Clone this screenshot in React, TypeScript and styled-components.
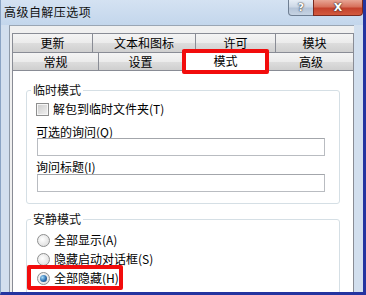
import React from "react";
import styled, { createGlobalStyle } from "styled-components";

const GlobalStyle = createGlobalStyle`
  html, body {
    margin: 0;
    padding: 0;
    background: #ffffff;
  }
  * {
    box-sizing: border-box;
  }
`;

// whole dialog, with the light aero frame and the dark blue outer edge
const Window = styled.div`
  width: 366px;
  height: 295px;
  display: flex;
  flex-direction: column;
  overflow: hidden;
  background: #d2dfee;
  border-left: 1px solid #8aa4c4;
  border-right: 3px solid #2434a0;
  border-bottom: 3px solid #2434a0;
  font-family: "Noto Sans CJK SC", "Liberation Sans", sans-serif;
  font-size: 12px;
  color: #000;
`;

const TitleBar = styled.div`
  height: 25px;
  flex: none;
  display: flex;
  align-items: flex-start;
  background: linear-gradient(#d4e2f2, #c3d6ec);
`;

const Title = styled.div`
  padding-left: 3px;
  line-height: 24px;
  font-size: 12px;
  letter-spacing: 0.45px;
  color: #111;
`;

const CaptionButtons = styled.div`
  margin-left: auto;
  display: flex;
`;

const CaptionButton = styled.div<{ $w: number; $close?: boolean }>`
  width: ${(p) => p.$w}px;
  height: 16px;
  display: flex;
  align-items: center;
  justify-content: center;
  font-family: "DejaVu Sans", sans-serif;
  font-weight: bold;
  font-size: 11px;
  color: #fff;
  text-shadow: 0 0 2px #333, 0 0 1px #222;
  border: 1px solid ${(p) => (p.$close ? "#7a2a20" : "#6f7f93")};
  border-top: none;
  margin-left: -1px;
  border-radius: ${(p) => (p.$close ? "0 0 4px 0" : "0 0 0 4px")};
  background: ${(p) =>
    p.$close
      ? "linear-gradient(#e8a594 0%, #d7715c 45%, #c4412c 55%, #d35a3e 100%)"
      : "linear-gradient(#e6edf6 0%, #cdd8e6 45%, #b5c4d8 55%, #c6d3e3 100%)"};
`;

// dialog client area (grey)
const Client = styled.div`
  flex: 1;
  min-height: 0;
  margin: 0 9px 0 8px;
  display: flex;
  flex-direction: column;
  background: #f0f0f0;
  border-left: 1px solid #8e9aa8;
  border-top: 1px solid #9aa6b4;
  padding: 7px 0 0 2px;
`;

const TabRow = styled.div`
  display: flex;
  position: relative;
`;

const Tab = styled.div<{ $w: number; $active?: boolean; $front?: boolean }>`
  position: relative;
  width: ${(p) => p.$w}px;
  height: ${(p) => (p.$active ? 21 : p.$front ? 19 : 19)}px;
  margin-top: ${(p) => (p.$active ? -2 : 0)}px;
  margin-left: -1px;
  &:first-child {
    margin-left: 0;
  }
  z-index: ${(p) => (p.$active ? 2 : 1)};
  border: 1px solid #898c95;
  border-bottom: ${(p) =>
    p.$front ? (p.$active ? "1px solid #fff" : "1px solid #898c95") : "none"};
  background: ${(p) =>
    p.$active
      ? "#ffffff"
      : "linear-gradient(#f4f4f4 0%, #ebebeb 50%, #dddddd 51%, #cfcfcf 100%)"};
  display: flex;
  align-items: center;
  justify-content: center;
  font-size: 12px;
  line-height: 14px;
  color: #000;
`;

const RedMark = styled.div<{ $l: number; $t: number; $w: number; $h: number }>`
  position: absolute;
  left: ${(p) => p.$l}px;
  top: ${(p) => p.$t}px;
  width: ${(p) => p.$w}px;
  height: ${(p) => p.$h}px;
  border: 4px solid #f20c0c;
  border-radius: 2px;
  pointer-events: none;
  z-index: 3;
`;

// white page under the tabs
const Panel = styled.div`
  flex: 1;
  background: #fff;
  border-left: 1px solid #898c95;
  border-right: 1px solid #898c95;
  padding: 19px 13px 0 13px;
  display: flex;
  flex-direction: column;
`;

const Group = styled.div<{ $gap?: number }>`
  margin-top: ${(p) => p.$gap ?? 0}px;
  display: flex;
  flex-direction: column;
  align-items: flex-start;
  border: 1px solid #d5dfe5;
  border-radius: 3px;
  padding: 0 14px 11px 9px;
`;

const Legend = styled.div`
  margin: -9px 0 0 -5px;
  padding: 0 2px;
  background: #fff;
  line-height: 16px;
  color: #111;
`;

const CheckRow = styled.div<{ $gap: number }>`
  position: relative;
  margin-top: ${(p) => p.$gap}px;
  height: 16px;
  display: flex;
  align-items: center;
  gap: 4px;
  line-height: 16px;
`;

const CheckBox = styled.span`
  width: 13px;
  height: 13px;
  border: 1px solid #8e8f8f;
  background: linear-gradient(135deg, #cbcbcb, #f2f2f2);
  box-shadow: inset 0 0 0 1px #f6f6f6;
`;

const Radio = styled.span<{ $on?: boolean }>`
  width: 13px;
  height: 13px;
  margin-left: 1px;
  border-radius: 50%;
  border: 1px solid #8e8f8f;
  background: radial-gradient(circle at 40% 40%, #ffffff, #d6d6d6);
  display: flex;
  align-items: center;
  justify-content: center;
  &::after {
    content: "";
    display: ${(p) => (p.$on ? "block" : "none")};
    width: 7px;
    height: 7px;
    border-radius: 50%;
    background: radial-gradient(circle at 35% 35%, #a8dcf8 0%, #2c6fb0 55%, #163a6a 100%);
  }
`;

const FieldLabel = styled.div<{ $gap: number }>`
  margin-top: ${(p) => p.$gap}px;
  line-height: 12px;
  height: 12px;
`;

const TextBox = styled.div<{ $gap?: number }>`
  margin: ${(p) => p.$gap ?? 0}px 0 0 1px;
  align-self: stretch;
  height: 18px;
  background: #fff;
  border: 1px solid #b9bcc1;
  border-top-color: #a3a6ab;
`;

const rowTabs = [
  { t: "更新", w: 81 },
  { t: "文本和图标", w: 104 },
  { t: "许可", w: 81 },
  { t: "模块", w: 79 },
];

const frontTabs = [
  { t: "常规", w: 87 },
  { t: "设置", w: 85 },
  { t: "模式", w: 87, active: true },
  { t: "高级", w: 86 },
];

const App = () => {
  return (
    <Window>
      <GlobalStyle />
      <TitleBar>
        <Title>高级自解压选项</Title>
        <CaptionButtons>
          <CaptionButton $w={26}>?</CaptionButton>
          <CaptionButton $w={50} $close>
            X
          </CaptionButton>
        </CaptionButtons>
      </TitleBar>
      <Client>
        <TabRow>
          {rowTabs.map((tab) => (
            <Tab key={tab.t} $w={tab.w}>
              {tab.t}
            </Tab>
          ))}
        </TabRow>
        <TabRow>
          {frontTabs.map((tab) => (
            <Tab key={tab.t} $w={tab.w} $front $active={tab.active}>
              {tab.t}
              {tab.active && <RedMark $l={-1} $t={-2} $w={87} $h={25} />}
            </Tab>
          ))}
        </TabRow>
        <Panel>
          <Group>
            <Legend>临时模式</Legend>
            <CheckRow $gap={3}>
              <CheckBox />
              解包到临时文件夹(T)
            </CheckRow>
            <FieldLabel $gap={9}>可选的询问(Q)</FieldLabel>
            <TextBox />
            <FieldLabel $gap={5}>询问标题(I)</FieldLabel>
            <TextBox $gap={1} />
          </Group>
          <Group $gap={15}>
            <Legend>安静模式</Legend>
            <CheckRow $gap={5}>
              <Radio />
              全部显示(A)
            </CheckRow>
            <CheckRow $gap={3}>
              <Radio />
              隐藏启动对话框(S)
            </CheckRow>
            <CheckRow $gap={3}>
              <Radio $on />
              全部隐藏(H)
              <RedMark $l={-9} $t={-5} $w={96} $h={25} />
            </CheckRow>
          </Group>
        </Panel>
      </Client>
    </Window>
  );
};

export default App;
